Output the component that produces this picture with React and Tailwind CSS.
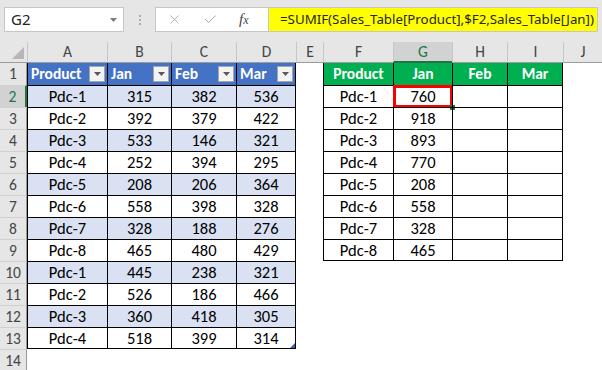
import React from 'react';
import { X, Check } from 'lucide-react';

const cols = [
  { k: 'A', w: 'w-[80px]' },
  { k: 'B', w: 'w-[64px]' },
  { k: 'C', w: 'w-[65px]' },
  { k: 'D', w: 'w-[60px]' },
  { k: 'E', w: 'w-[27px]' },
  { k: 'F', w: 'w-[70px]' },
  { k: 'G', w: 'w-[59px]' },
  { k: 'H', w: 'w-[55px]' },
  { k: 'I', w: 'w-[56px]' },
  { k: 'J', w: 'w-[39px]' },
];

const sales = [
  ['Pdc-1', 315, 382, 536],
  ['Pdc-2', 392, 379, 422],
  ['Pdc-3', 533, 146, 321],
  ['Pdc-4', 252, 394, 295],
  ['Pdc-5', 208, 206, 364],
  ['Pdc-6', 558, 398, 328],
  ['Pdc-7', 328, 188, 276],
  ['Pdc-8', 465, 480, 429],
  ['Pdc-1', 445, 238, 321],
  ['Pdc-2', 526, 186, 466],
  ['Pdc-3', 360, 418, 305],
  ['Pdc-4', 518, 399, 314],
];

const summary = [
  ['Pdc-1', 760],
  ['Pdc-2', 918],
  ['Pdc-3', 893],
  ['Pdc-4', 770],
  ['Pdc-5', 208],
  ['Pdc-6', 558],
  ['Pdc-7', 328],
  ['Pdc-8', 465],
];

const FilterButton = () => (
  <div className="absolute right-[2px] top-[3px] w-[16px] h-[16px] bg-[#f3f3f3] border border-[#a6a6a6] flex items-center justify-center">
    <svg width="7" height="4" viewBox="0 0 7 4">
      <path d="M0 0 L7 0 L3.5 4 Z" fill="#595959" />
    </svg>
  </div>
);

// returns [className, content] for a cell of the sheet
const cellFor = (row, ci) => {
  const base = 'border-black';
  // left table A-D, rows 1..13
  if (ci <= 3 && row <= 13) {
    const edges = `border-l ${ci === 3 ? 'border-r' : ''} ${row > 1 ? 'border-t' : ''} ${row === 13 ? 'border-b' : ''}`;
    if (row === 1) {
      const label = ['Product', 'Jan', 'Feb', 'Mar'][ci];
      return [
        `${base} ${edges} relative bg-[#4472c4] text-white font-bold text-[15.5px] pl-[3px] flex items-center`,
        <>
          <span>{label}</span>
          <FilterButton />
        </>,
      ];
    }
    const r = sales[row - 2];
    const band = row % 2 === 0 ? 'bg-[#d9e1f2]' : 'bg-white';
    return [
      `${base} ${edges} ${band} relative flex items-center justify-center text-[16.5px]`,
      <>
        {r[ci]}
        {row === 13 && ci === 3 && (
          <svg className="absolute right-0 bottom-0" width="5" height="5" viewBox="0 0 5 5">
            <path d="M5 0 L5 5 L0 5 Z" fill="#3f5fa8" />
          </svg>
        )}
      </>,
    ];
  }
  // right table F-I, rows 1..9
  if (ci >= 5 && ci <= 8 && row <= 9) {
    const k = ci - 5;
    const edges = `border-l ${ci === 8 ? 'border-r' : ''} ${row > 1 ? 'border-t' : ''} ${row === 9 ? 'border-b' : ''}`;
    if (row === 1) {
      const label = ['Product', 'Jan', 'Feb', 'Mar'][k];
      return [
        `${base} ${edges} bg-[#00b050] text-white font-bold text-[15.5px] flex items-center justify-center`,
        label,
      ];
    }
    const r = summary[row - 2];
    return [
      `${base} ${edges} relative flex items-center justify-center text-[16.5px]`,
      <>
        {k < 2 ? r[k] : ''}
        {row === 2 && k === 1 && (
          <>
            <div className="absolute -left-[1px] -top-[1px] -right-[1px] -bottom-[1px] border-[3px] border-[#ff0000]" />
            <div className="absolute -right-[3px] -bottom-[3px] w-[5px] h-[5px] bg-[#217346]" />
          </>
        )}
      </>,
    ];
  }
  return ['', null];
};

const FormulaBar = () => (
  <div className="h-[42px] bg-[#e6e6e6] flex items-start pt-[7px] px-[4px] font-['Segoe_UI','Noto_Sans',sans-serif]">
    <div className="w-[120px] h-[25px] bg-white border border-[#c6c6c6] flex items-center justify-between pl-[6px] pr-[6px]">
      <span className="text-[15px] text-[#222]">G2</span>
      <svg width="7" height="4" viewBox="0 0 7 4">
        <path d="M0 0 L7 0 L3.5 4 Z" fill="#7a7a7a" />
      </svg>
    </div>
    <div className="w-[31px] h-[25px] flex flex-col items-center justify-center gap-[2px]">
      <div className="w-[2px] h-[2px] bg-[#b0b0b0]" />
      <div className="w-[2px] h-[2px] bg-[#b0b0b0]" />
      <div className="w-[2px] h-[2px] bg-[#b0b0b0]" />
    </div>
    <div className="flex-1 h-[25px] flex border border-[#c6c6c6] bg-white">
      <div className="w-[112px] flex items-center pl-[11px] gap-[21px]">
        <X size={15} strokeWidth={1.3} color="#a6a6a6" />
        <Check size={15} strokeWidth={1.6} color="#a6a6a6" />
        <span className="font-['Liberation_Serif',serif] italic text-[15px] text-[#444] leading-none">
          f<span className="text-[12px]">x</span>
        </span>
      </div>
      <div className="flex-1 bg-[#ffff00] border-l border-[#c6c6c6] flex items-center pl-[11px] text-[13.3px] text-[#262626] whitespace-nowrap overflow-hidden">
        =SUMIF(Sales_Table[Product],$F2,Sales_Table[Jan])
      </div>
    </div>
  </div>
);

const ColumnHeaders = () => (
  <div className="flex h-[21px] bg-[#e6e6e6] text-[15.5px] text-[#444]">
    <div className="w-[27px] border-b border-[#9b9b9b] relative">
      <svg className="absolute right-[3px] bottom-[3px]" width="12" height="12" viewBox="0 0 12 12">
        <path d="M12 0 L12 12 L0 12 Z" fill="#b7b7b7" />
      </svg>
    </div>
    {cols.map((c) => (
      <div
        key={c.k}
        className={`${c.w} border-l border-[#c6c6c6] flex items-center justify-center ${
          c.k === 'G'
            ? 'bg-[#d2d2d2] text-[#217346] border-b-2 border-b-[#217346]'
            : 'border-b border-b-[#9b9b9b]'
        }`}
      >
        {c.k}
      </div>
    ))}
  </div>
);

const Row = ({ n }) => (
  <div className="flex h-[22px]">
    <div
      className={`w-[27px] shrink-0 flex items-center justify-center text-[15.5px] ${
        n > 1 ? 'border-t border-t-[#d0d0d0]' : ''
      } ${
        n === 2
          ? 'bg-[#d2d2d2] text-[#217346] border-r-2 border-r-[#217346]'
          : 'bg-[#e6e6e6] text-[#444] border-r border-r-[#9b9b9b]'
      }`}
    >
      {n}
    </div>
    {cols.map((c, ci) => {
      const [cls, content] = cellFor(n, ci);
      return (
        <div key={c.k} className={`${c.w} shrink-0 h-[22px] ${cls}`}>
          {content}
        </div>
      );
    })}
  </div>
);

export default function App() {
  return (
    <div className="w-[602px] h-[370px] overflow-hidden bg-white text-black font-['Calibri','Carlito','Lato',sans-serif]">
      <FormulaBar />
      <ColumnHeaders />
      {Array.from({ length: 14 }, (_, i) => (
        <Row key={i} n={i + 1} />
      ))}
    </div>
  );
}
